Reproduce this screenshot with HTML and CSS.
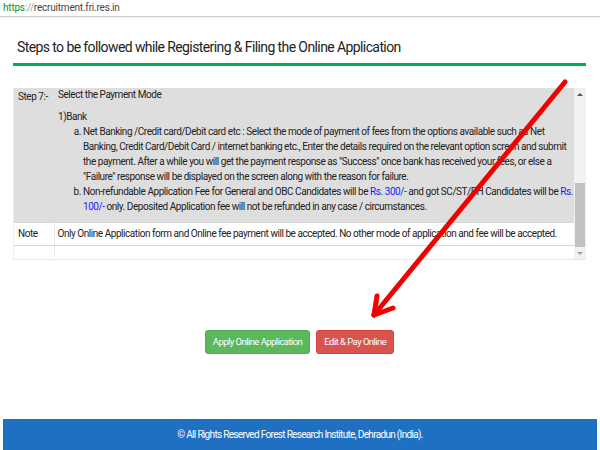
FILE: index.html
```html
<!DOCTYPE html>
<html lang="en">
<head>
<meta charset="utf-8">
<title>Steps to be followed</title>
<link rel="stylesheet" href="styles.css">
</head>
<body>
<div class="page">
  <div class="urlbar"><span class="proto">https</span><span class="sep">://</span>recruitment.fri.res.in</div>
  <main class="main">
    <h1 class="heading">Steps to be followed while Registering &amp; Filing the Online Application</h1>
    <div class="rule"></div>
    <div class="panel">
      <div class="table-wrap">
        <table class="steps">
          <tr class="row-gray">
            <td class="label">Step 7:-</td>
            <td class="content">
              <div class="title">Select the Payment Mode</div>
              <div class="bank">1)Bank</div>
              <ol class="items" type="a">
                <li>Net Banking /Credit card/Debit card etc : Select the mode of payment of fees from the options available such as Net<br>Banking, Credit Card/Debit Card / internet banking etc., Enter the details required on the relevant option screen and submit<br>the payment. After a while you will get the payment response as "Success" once bank has received your fees, or else a<br>"Failure" response will be displayed on the screen along with the reason for failure.</li>
                <li>Non-refundable Application Fee for General and OBC Candidates will be <span class="amt">Rs. 300/-</span> and got SC/ST/PH Candidates will be <span class="amt">Rs.</span><br><span class="amt">100/-</span> only. Deposited Application fee will not be refunded in any case / circumstances.</li>
              </ol>
            </td>
          </tr>
          <tr class="row-note">
            <td class="label">Note</td>
            <td class="content">Only Online Application form and Online fee payment will be accepted. No other mode of application and fee will be accepted.</td>
          </tr>
          <tr class="row-empty">
            <td class="label"></td>
            <td class="content"></td>
          </tr>
        </table>
      </div>
      <div class="scrollbar">
        <div class="sb-arrow up"></div>
        <div class="sb-track"><div class="sb-thumb"></div></div>
        <div class="sb-arrow down"></div>
      </div>
    </div>
    <div class="actions">
      <a class="btn btn-green" href="#">Apply Online Application</a>
      <a class="btn btn-red" href="#">Edit &amp; Pay Online</a>
    </div>
  </main>
  <footer class="footer">© All Rights Reserved Forest Research Institute, Dehradun (India).</footer>
  <svg class="arrow" width="600" height="450" viewBox="0 0 600 450">
    <g stroke="#f20000" stroke-width="5" stroke-linecap="round" fill="none">
      <line x1="565" y1="82" x2="374" y2="315"/>
      <line x1="374" y1="315" x2="377" y2="296"/>
      <line x1="374" y1="315" x2="393" y2="308"/>
    </g>
  </svg>
</div>
</body>
</html>
```
FILE: styles.css
```css
html, body {
  margin: 0;
  padding: 0;
  background: #ffffff;
}
body {
  font-family: Roboto, "Liberation Sans", sans-serif;
  color: #222222;
}
.page {
  position: relative;
  width: 600px;
  height: 450px;
  display: flex;
  flex-direction: column;
  overflow: hidden;
}
.urlbar {
  height: 16px;
  line-height: 16px;
  font-size: 10px;
  letter-spacing: -0.2px;
  padding-left: 3px;
  color: #444444;
  border-bottom: 1px solid #cfcfcf;
  box-shadow: 0 1px 1px #eeeeee;
}
.proto { color: #1a8a2a; }
.sep { color: #999999; }
.main {
  padding: 0 14px 0 13px;
  flex: 1;
}
.heading {
  margin: 20px 0 0 4px;
  font-size: 14px;
  letter-spacing: -0.6px;
  font-weight: normal;
  line-height: 20px;
  color: #222222;
}
.rule {
  margin-top: 6px;
  height: 3px;
  background: #00b050;
}
.panel {
  margin-top: 22px;
  display: flex;
  height: 171px;
  border-bottom: 1px solid #e6e6e6;
}
.table-wrap {
  flex: 1;
  min-width: 0;
  border-left: 1px solid #eeeeee;
  overflow: hidden;
}
.steps {
  width: 100%;
  table-layout: fixed;
  border-collapse: collapse;
  font-size: 10px;
  letter-spacing: -0.45px;
  line-height: 15px;
  color: #222222;
}
.steps td {
  vertical-align: top;
  padding: 0;
}
.steps .label {
  width: 36px;
  padding-left: 4px;
  white-space: nowrap;
}
.row-gray td {
  background: #dedede;
  padding-top: 1px;
  padding-bottom: 8px;
}
.row-gray .content { padding-left: 4px; }
.title { height: 20px; line-height: 12px; }
.bank { margin-top: 0; }
.items {
  margin: 0;
  padding-left: 25px;
  white-space: nowrap;
}
.amt { color: #1a1aff; }
.row-note td {
  height: 22px;
  line-height: 22px;
  border-top: 1px solid #d6d6d6;
  border-bottom: 1px solid #d6d6d6;
}
.row-note .content,
.row-empty .content {
  border-left: 1px solid #e8e8e8;
  padding-left: 3px;
  white-space: nowrap;
}
.row-empty td { height: 11px; }
.scrollbar {
  width: 12px;
  background: #f1f1f1;
  display: flex;
  flex-direction: column;
}
.sb-arrow {
  height: 12px;
  display: flex;
  align-items: center;
  justify-content: center;
}
.sb-arrow::before {
  content: "";
  width: 0;
  height: 0;
  border-left: 3px solid transparent;
  border-right: 3px solid transparent;
}
.sb-arrow.up::before { border-bottom: 3px solid #555555; }
.sb-arrow.down::before { border-top: 3px solid #a0a0a0; }
.sb-track {
  flex: 1;
  display: flex;
  flex-direction: column;
  justify-content: flex-end;
  padding: 0 1px;
}
.sb-thumb {
  height: 64px;
  background: #c1c1c1;
}
.actions {
  margin-top: 70px;
  display: flex;
  justify-content: center;
  gap: 6px;
  padding-left: 0;
}
.btn {
  display: inline-block;
  height: 22px;
  line-height: 22px;
  padding: 0 7px;
  border-radius: 3px;
  color: #ffffff;
  font-size: 9.5px;
  letter-spacing: -0.55px;
  text-decoration: none;
}
.btn-green {
  background: #5cb85c;
  border: 1px solid #4cae4c;
}
.btn-red {
  background: #d9534f;
  border: 1px solid #d43f3a;
}
.footer {
  margin: 0 3px;
  height: 31px;
  line-height: 31px;
  background: #1f6fc2;
  color: #ffffff;
  text-align: center;
  font-size: 10px;
  letter-spacing: -0.68px;
}
.arrow {
  position: absolute;
  top: 0;
  left: 0;
  pointer-events: none;
}
```
